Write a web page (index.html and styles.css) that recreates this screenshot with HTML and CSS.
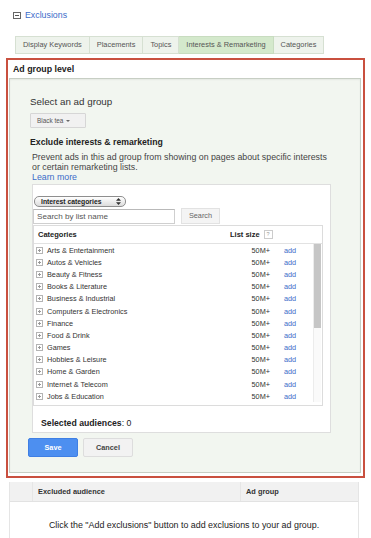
FILE: index.html
```html
<!DOCTYPE html>
<html lang="en">
<head>
    <meta charset="UTF-8">
    <meta name="viewport" content="width=device-width, initial-scale=1.0">
    <title>Exclusions</title>
    <link rel="stylesheet" href="styles.css">
</head>
<body>
<div class="toggle">
    <span class="toggle-box"></span>
    <a href="#" class="toggle-link">Exclusions</a>
</div>

<div class="tabs">
    <span class="tab">Display Keywords</span>
    <span class="tab">Placements</span>
    <span class="tab">Topics</span>
    <span class="tab active">Interests &amp; Remarketing</span>
    <span class="tab">Categories</span>
</div>

<div class="edit-box">
    <div class="edit-title">Ad group level</div>
    <div class="panel">
        <div class="panel-label">Select an ad group</div>
        <div class="dropdown">Black tea <span class="caret"></span></div>

        <div class="section-title">Exclude interests &amp; remarketing</div>
        <p class="section-text">Prevent ads in this ad group from showing on pages about specific interests or certain remarketing lists.<br><a href="#">Learn more</a></p>

        <div class="picker">
            <div class="list-select">
                <span>Interest categories</span>
                <svg width="5" height="7" viewBox="0 0 5 7"><path d="M2.5 0 L5 2.8 H0 Z M2.5 7 L5 4.2 H0 Z" fill="#333"/></svg>
            </div>
            <div class="search-row">
                <div class="search-input">Search by list name</div>
                <div class="search-btn">Search</div>
            </div>
            <div class="cat-table">
                <div class="cat-head">
                    <span class="cat-head-name">Categories</span>
                    <span class="cat-head-size">List size <span class="help">?</span></span>
                </div>
                <div class="cat-body">
                    <div class="cat-rows">
                        <div class="cat-row"><span class="plus"></span><span>Arts &amp; Entertainment</span><span class="size">50M+</span><a href="#">add</a></div>
                        <div class="cat-row"><span class="plus"></span><span>Autos &amp; Vehicles</span><span class="size">50M+</span><a href="#">add</a></div>
                        <div class="cat-row"><span class="plus"></span><span>Beauty &amp; Fitness</span><span class="size">50M+</span><a href="#">add</a></div>
                        <div class="cat-row"><span class="plus"></span><span>Books &amp; Literature</span><span class="size">50M+</span><a href="#">add</a></div>
                        <div class="cat-row"><span class="plus"></span><span>Business &amp; Industrial</span><span class="size">50M+</span><a href="#">add</a></div>
                        <div class="cat-row"><span class="plus"></span><span>Computers &amp; Electronics</span><span class="size">50M+</span><a href="#">add</a></div>
                        <div class="cat-row"><span class="plus"></span><span>Finance</span><span class="size">50M+</span><a href="#">add</a></div>
                        <div class="cat-row"><span class="plus"></span><span>Food &amp; Drink</span><span class="size">50M+</span><a href="#">add</a></div>
                        <div class="cat-row"><span class="plus"></span><span>Games</span><span class="size">50M+</span><a href="#">add</a></div>
                        <div class="cat-row"><span class="plus"></span><span>Hobbies &amp; Leisure</span><span class="size">50M+</span><a href="#">add</a></div>
                        <div class="cat-row"><span class="plus"></span><span>Home &amp; Garden</span><span class="size">50M+</span><a href="#">add</a></div>
                        <div class="cat-row"><span class="plus"></span><span>Internet &amp; Telecom</span><span class="size">50M+</span><a href="#">add</a></div>
                        <div class="cat-row"><span class="plus"></span><span>Jobs &amp; Education</span><span class="size">50M+</span><a href="#">add</a></div>
                    </div>
                    <div class="scrollbar"><div class="thumb"></div></div>
                </div>
            </div>
            <div class="selected"><b>Selected audiences</b>: 0</div>
        </div>

        <div class="actions">
            <span class="btn btn-save">Save</span>
            <span class="btn btn-cancel">Cancel</span>
        </div>
    </div>
</div>

<div class="results">
    <div class="results-head">
        <span class="col-check"></span>
        <span class="col-audience">Excluded audience</span>
        <span class="col-group">Ad group</span>
    </div>
    <div class="results-empty">Click the "Add exclusions" button to add exclusions to your ad group.</div>
</div>
</body>
</html>
```

FILE: styles.css
```css
body {
    margin: 0;
    font-family: "Liberation Sans", Arial, sans-serif;
    color: #333;
    background: #fff;
}
a {
    color: #3b6bc9;
    text-decoration: none;
}

/* header toggle */
.toggle {
    display: flex;
    align-items: center;
    padding: 9px 0 0 13px;
    height: 12px;
}
.toggle-box {
    width: 6px;
    height: 5px;
    border: 1px solid #666;
    position: relative;
    margin-right: 4px;
}
.toggle-box:after {
    content: "";
    position: absolute;
    left: 1px;
    right: 1px;
    top: 2px;
    height: 1px;
    background: #555;
}
.toggle-link {
    font-size: 8.8px;
    line-height: 12px;
}

/* tabs */
.tabs {
    display: flex;
    margin: 15px 0 0 15px;
    height: 18px;
}
.tab {
    font-size: 7.4px;
    line-height: 16px;
    color: #555;
    background: #eef3ec;
    border: 1px solid #d6e0d2;
    border-left: none;
    padding: 0 7px;
}
.tab:first-child {
    border-left: 1px solid #d6e0d2;
}
.tab.active {
    background: #d4e9cc;
    border-color: #c8dcc0;
}

/* red edit box */
.edit-box {
    margin: 4px 0 0 6px;
    width: 352px;
    border: 2px solid #c9503f;
    padding: 0 2px 3px 1px;
}
.edit-title {
    font-size: 8.8px;
    font-weight: bold;
    color: #222;
    line-height: 18px;
    padding-left: 4px;
}
.panel {
    background: #f2f6f0;
    border: 1px solid #c7cec4;
    box-shadow: inset 0 1px 2px rgba(0,0,0,0.06);
    padding: 17px 0 15px 18px;
}
.panel-label {
    font-size: 9.8px;
    line-height: 12px;
    color: #333;
    margin-left: 2px;
}
.dropdown {
    display: inline-flex;
    align-items: center;
    margin: 5px 0 0 2px;
    height: 13px;
    width: 43px;
    padding: 0 5px 0 6px;
    font-size: 6.4px;
    color: #555;
    background: #f1f1f1;
    border: 1px solid #d6d6d6;
    border-radius: 1px;
}
.caret {
    margin-left: 3px;
    border-left: 2px solid transparent;
    border-right: 2px solid transparent;
    border-top: 2px solid #666;
}
.section-title {
    font-size: 8.7px;
    font-weight: bold;
    color: #222;
    line-height: 11px;
    margin: 9px 0 0 2px;
}
.section-text {
    font-size: 8.8px;
    line-height: 10px;
    color: #444;
    margin: 4px 0 0 4px;
    width: 300px;
}

/* white picker box */
.picker {
    margin: 2px 0 0 4px;
    width: 299px;
    height: 249px;
    background: #fff;
    border: 1px solid #dedede;
    padding-top: 11px;
    box-sizing: border-box;
}
.list-select {
    display: flex;
    align-items: center;
    justify-content: space-between;
    margin-left: 1px;
    width: 80px;
    height: 9px;
    padding: 0 4px 0 6px;
    border: 1px solid #8e8e8e;
    border-radius: 5px;
    background: linear-gradient(#ffffff, #dcdcdc);
    font-size: 6.8px;
    font-weight: bold;
    color: #222;
}
.search-row {
    display: flex;
    align-items: center;
    margin-top: 1px;
    height: 16px;
}
.search-input {
    width: 137px;
    height: 13px;
    border: 1px solid #cfcfcf;
    border-top-color: #b9b9b9;
    padding-left: 3px;
    font-size: 8.1px;
    line-height: 13px;
    color: #555;
}
.search-btn {
    margin-left: 6px;
    width: 37px;
    height: 14px;
    border: 1px solid #e2e2e2;
    background: #f4f4f4;
    font-size: 7.3px;
    line-height: 14px;
    text-align: center;
    color: #666;
}
.cat-table {
    margin-top: 1px;
    width: 290px;
    border: 1px solid #dcdcdc;
    box-sizing: border-box;
}
.cat-head {
    display: flex;
    align-items: center;
    height: 17px;
    border-bottom: 1px solid #e2e2e2;
    font-size: 7.5px;
    font-weight: bold;
    color: #222;
}
.cat-head-name {
    padding-left: 4px;
    width: 192px;
}
.cat-head-size {
    display: flex;
    align-items: center;
}
.help {
    display: inline-block;
    margin-left: 4px;
    width: 7px;
    height: 7px;
    border: 1px solid #ccc;
    font-size: 5.5px;
    line-height: 7px;
    text-align: center;
    color: #999;
    font-weight: normal;
}
.cat-body {
    display: flex;
    padding-bottom: 3px;
}
.cat-rows {
    flex: 1;
}
.cat-row {
    display: grid;
    grid-template-columns: 13px 1fr 50px 43px;
    align-items: center;
    height: 12.2px;
    font-size: 7.3px;
    color: #333;
}
.plus {
    margin-left: 2px;
    width: 5px;
    height: 5px;
    border: 1px solid #b4b4b4;
    position: relative;
}
.plus:before, .plus:after {
    content: "";
    position: absolute;
    background: #999;
}
.plus:before {
    left: 1px;
    right: 1px;
    top: 2px;
    height: 1px;
}
.plus:after {
    top: 1px;
    bottom: 1px;
    left: 2px;
    width: 1px;
}
.size {
    text-align: right;
}
.cat-row a {
    padding-left: 14px;
}
.scrollbar {
    width: 7px;
    margin-right: 1px;
    background: #fafafa;
    border-left: 1px solid #ececec;
}
.thumb {
    height: 84px;
    background: #c6c6c6;
}
.selected {
    margin: 11px 0 0 8px;
    font-size: 8.7px;
    line-height: 12px;
    color: #222;
}

/* buttons */
.actions {
    display: flex;
    gap: 5px;
    margin-top: 5px;
}
.btn {
    width: 48px;
    height: 17px;
    font-size: 7.3px;
    font-weight: bold;
    line-height: 17px;
    text-align: center;
    border: 1px solid #ddd;
    border-radius: 2px;
}
.btn-save {
    background: #4d8ff0;
    border-color: #3f7fe4;
    color: #fff;
}
.btn-cancel {
    background: #f2f2f2;
    color: #444;
}

/* bottom table */
.results {
    margin: 4px 0 0 9px;
    width: 348px;
    border-left: 1px solid #e5e5e5;
    border-right: 1px solid #e5e5e5;
}
.results-head {
    display: flex;
    height: 19px;
    background: #f1f1f1;
    border-bottom: 1px solid #e2e2e2;
    font-size: 7.4px;
    font-weight: bold;
    color: #333;
}
.results-head span {
    line-height: 19px;
}
.col-check {
    width: 22px;
    border-right: 1px solid #e6e6e6;
}
.col-audience {
    width: 202px;
    padding-left: 5px;
    border-right: 1px solid #e6e6e6;
}
.col-group {
    padding-left: 5px;
}
.results-empty {
    padding-top: 17px;
    height: 40px;
    text-align: center;
    font-size: 8.9px;
    line-height: 12px;
    color: #222;
}
```
